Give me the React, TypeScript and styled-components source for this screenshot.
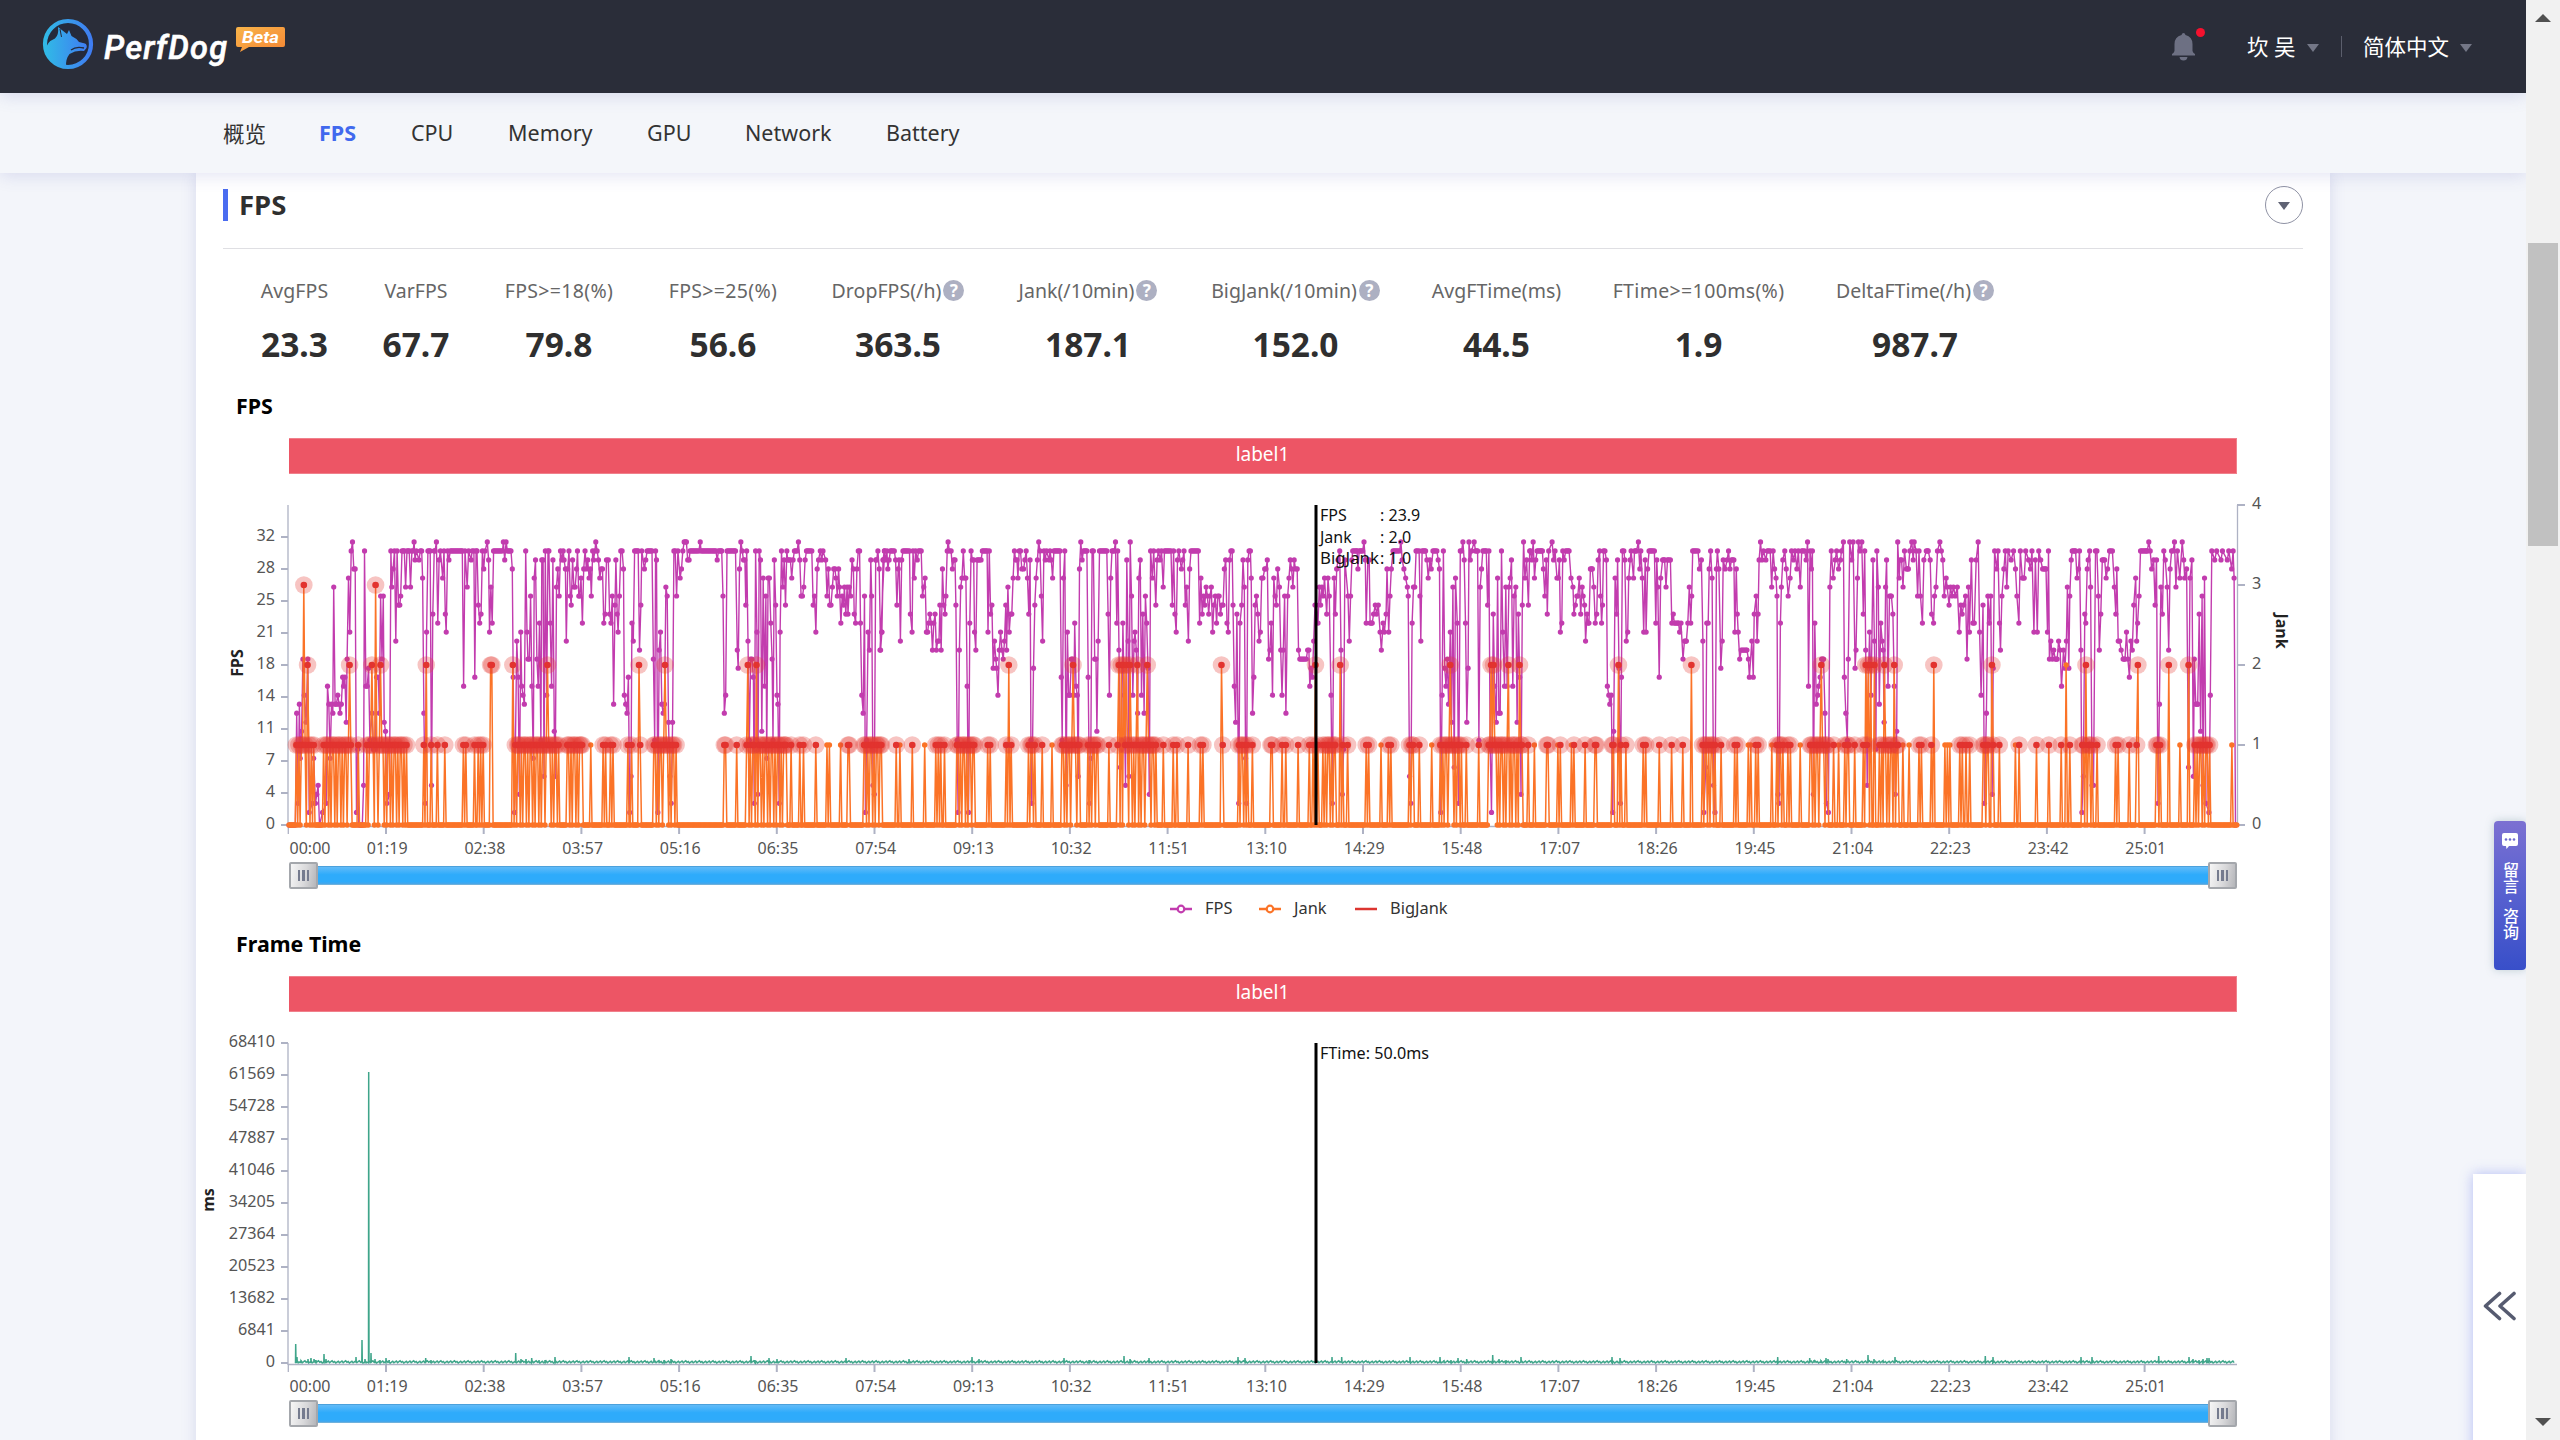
import React from "react";
import styled, { createGlobalStyle } from "styled-components";

const FONT = `"Noto Sans", "Noto Sans CJK SC", "Open Sans", sans-serif`;

const GlobalStyle = createGlobalStyle`
  * { box-sizing: border-box; }
  body { margin: 0; background: #f3f5fa; font-family: ${FONT}; overflow: hidden; }
`;

/* ---------- series data ---------- */

const STEP = 1.2367;
const PLOT_H = 320;
const FPS_PX = 9.015;
const PLOT_W = 1948;

type Trace = { origin: number; unit: number; fps: string; jank: string };

const TRACES: Trace[] = [
  {
    origin: -99,
    unit: 0.4464,
    fps: `222 0,236 0,239 12,242 2,245 13,247 7,250 10,253 18,256 14,260 11,264 18,267 1,274 2,277 7,281 2,284 3,287 4,290 0,297 1,305 2,308 15,311 13,314 7,317 13,320 12,322 26,325 13,328 13,331 14,334 13,336 12,339 13,342 16,344 15,347 16,350 11,352 18,355 27,358 21,361 30,364 31,367 28,370 28,373 1,376 8,378 0,386 0,389 4,391 30,394 15,397 15,400 17,403 9,408 12,411 8,415 8,418 16,422 16,424 12,427 25,430 18,433 25,435 11,438 10,441 2,447 3,450 30,452 26,455 28,458 30,461 20,464 30,467 24,470 24,472 25,475 30,480 30,483 26,486 30,491 30,494 26,497 30,500 30,502 31,504 29,507 30,513 29,516 30,519 30,521 27,524 12,527 2,530 21,533 30,538 30,541 4,544 23,547 30,549 30,552 31,555 22,558 29,561 30,566 27,569 30,572 23,574 21,577 30,580 29,583 30,610 30,613 15,616 30,621 26,624 30,630 29,632 30,636 30,638 16,641 30,643 30,646 24,649 22,652 23,655 30,658 28,661 30,666 31,669 29,671 21,674 26,677 22,680 30,700 30,702 31,705 29,708 31,711 30,719 30,722 28,724 16,727 1,732 20,735 16,738 3,741 21,743 15,746 14,749 13,752 30,755 21,757 18,760 18,763 25,766 15,769 7,771 27,774 29,777 18,780 15,783 22,786 9,788 29,791 29,793 5,796 30,799 14,802 30,804 30,807 22,810 15,813 29,816 10,818 5,821 26,824 28,827 25,830 30,833 29,836 30,838 29,841 28,843 20,846 28,849 30,852 25,854 24,857 29,860 26,863 26,866 28,868 30,871 25,873 25,876 27,879 22,882 28,885 30,888 28,891 29,894 27,897 28,899 25,902 30,904 29,907 30,909 31,912 30,915 29,918 27,921 28,924 28,927 22,930 23,933 29,937 29,940 23,943 22,946 25,949 13,952 24,954 29,957 23,959 21,962 25,965 30,968 30,971 28,973 14,976 13,979 12,982 16,985 1,988 5,990 22,993 20,996 30,1004 30,1007 19,1010 24,1012 30,1018 28,1021 29,1024 30,1035 30,1038 18,1041 9,1043 30,1045 29,1048 1,1051 19,1054 21,1057 13,1060 12,1063 13,1066 26,1069 25,1072 11,1075 5,1078 2,1081 11,1084 30,1087 30,1090 25,1093 30,1098 27,1101 28,1104 30,1107 31,1112 31,1115 29,1118 29,1120 30,1140 30,1143 31,1145 30,1178 30,1181 29,1184 30,1191 30,1194 25,1197 12,1200 14,1203 30,1222 30,1226 19,1228 17,1231 28,1234 31,1237 30,1240 29,1243 29,1245 24,1247 30,1250 20,1253 9,1256 18,1259 18,1262 16,1264 2,1267 30,1270 21,1272 3,1275 30,1278 29,1281 10,1284 27,1287 15,1290 25,1292 7,1295 27,1298 27,1301 22,1304 18,1306 9,1309 29,1312 24,1315 14,1317 13,1320 2,1322 21,1325 30,1328 26,1331 29,1334 24,1337 30,1339 29,1345 29,1348 27,1351 29,1354 30,1360 30,1363 31,1366 29,1369 25,1372 25,1375 26,1378 29,1381 30,1393 30,1396 24,1399 25,1402 21,1405 28,1408 29,1412 30,1415 29,1418 30,1424 29,1427 25,1430 28,1433 24,1436 24,1439 26,1442 28,1445 28,1447 27,1450 25,1453 28,1455 26,1458 22,1461 25,1464 24,1466 26,1469 23,1472 26,1474 23,1477 26,1480 25,1483 29,1486 28,1488 23,1491 22,1494 28,1497 30,1500 30,1502 22,1505 14,1508 12,1511 25,1513 1,1516 9,1519 21,1522 19,1525 29,1527 25,1530 4,1533 3,1536 29,1538 29,1541 30,1544 28,1547 19,1550 21,1553 29,1556 30`,
    jank: `239-277,256:3,264:2,297-360,358:2,376,397-485,408:2,416:3,428:2,523,529:2,541,555,571,613,618,638,645,652,656,673:2,677:2,724:2,727-825,801:2,846-877,898!,926,931,941,949,982,989,1006:2,1009,1038-1090,1065:2,1197,1201,1225,1247-1336,1250:2,1269:2,1347,1367,1375,1402,1427!,1433!,1458!,1473,1478,1511-1548`,
  },
  {
    origin: 591,
    unit: 0.4337,
    fps: `0 19,4 21,7 29,10 30,13 29,16 30,18 28,21 29,24 30,33 30,36 29,39 24,42 28,44 29,47 20,50 29,53 30,68 30,70 23,74 21,76 30,79 27,82 30,86 29,89 30,95 30,98 25,101 26,104 27,107 21,110 21,112 22,115 23,118 22,121 19,124 22,127 23,130 19,133 20,136 20,138 24,141 19,144 28,147 24,150 23,152 25,155 30,157 31,160 30,164 30,167 28,170 29,173 29,175 24,178 9,180 1,183 19,186 26,189 27,192 30,195 27,198 27,201 15,204 1,207 22,210 30,213 29,216 29,218 21,221 19,224 29,233 29,236 30,247 30,249 21,252 30,255 23,258 24,261 17,264 20,267 18,269 17,272 14,275 19,278 21,281 19,284 18,287 20,290 24,292 19,295 26,298 21,301 23,304 23,307 27,310 30,313 29,316 29,318 27,321 30,324 30,327 28,331 28,334 29,337 30,340 27,343 23,346 29,348 9,350 2,354 17,357 24,360 27,363 29,366 31,369 30,372 25,375 20,378 30,381 29,384 30,390 29,392 30,395 29,398 27,401 30,415 30,418 16,420 9,423 27,426 30,429 4,432 21,435 14,438 14,441 18,444 18,447 14,449 22,452 15,455 14,457 5,460 28,463 31,466 29,469 30,477 30,480 16,483 2,486 7,489 30,492 30,495 18,498 18,500 10,503 20,506 30,523 30,526 23,529 14,532 27,535 30,540 30,543 31,546 22,548 30,551 19,554 6,557 9,560 22,563 14,566 4,569 29,572 20,574 5,577 31,580 25,583 14,586 20,588 21,591 19,594 12,597 27,600 29,603 14,606 23,609 12,612 25,615 22,618 17,621 3,624 30,628 27,631 30,636 24,639 29,642 30,646 29,649 30,653 26,656 30,671 30,674 24,677 30,680 23,683 21,686 29,689 30,695 28,698 29,701 30,704 24,707 26,711 20,714 28,717 30,734 30,737 22,740 27,743 23,746 25,749 24,752 26,755 25,758 23,761 25,764 26,767 21,770 24,773 25,776 22,779 25,782 25,785 23,788 24,791 24,794 28,797 29,800 22,803 21,806 29,809 30,812 30,814 24,817 15,820 11,823 23,827 2,830 22,834 24,837 29,840 26,843 7,845 2,848 29,851 30,854 30,856 27,859 12,862 16,865 24,868 25,871 23,874 20,877 21,880 27,883 27,887 28,890 28,893 29,896 18,899 19,902 22,905 14,908 27,911 25,914 24,917 28,921 26,924 19,927 14,930 19,933 25,936 12,940 25,943 27,946 29,949 28,952 26,955 29,958 28,962 28,965 19,968 18,983 18,986 19,989 19,991 15,994 17,997 16,1000 20,1003 24,1006 24,1010 22,1013 26,1016 24,1019 26,1022 25,1025 27,1030 23,1033 27,1036 25,1040 14,1043 2,1047 27,1050 23,1053 28,1056 29,1060 30,1063 19,1066 3,1069 8,1072 29,1079 25,1082 20,1085 25,1088 29,1090 30,1100 30,1102 28,1105 30,1113 30,1116 31,1119 29,1121 22,1125 29,1128 29,1130 22,1135 22,1138 23,1142 24,1145 23,1149 24,1153 21,1156 19,1160 22,1163 21,1167 23,1169 28,1173 21,1176 25,1179 28,1183 30,1198 30,1201 31,1204 29,1208 28,1212 27,1216 26,1218 25,1221 5,1224 2,1227 22,1230 26,1233 26,1236 30,1243 30,1245 25,1247 20,1250 30,1258 30,1261 29,1264 27,1268 29,1271 28,1275 30,1284 30,1287 29,1290 28,1293 1,1296 14,1299 30,1302 17,1305 15,1308 18,1311 13,1315 21,1318 11,1321 26,1324 6,1327 27,1331 22,1334 2,1338 30,1341 30,1344 31,1347 29,1350 22,1353 11,1356 17,1358 31,1361 29,1364 30,1370 31,1373 30,1378 30,1381 9,1384 26,1387 28,1390 30,1398 30,1401 24,1404 30,1407 8,1410 1,1414 23,1417 15,1421 11,1424 27,1427 12,1430 12,1433 30,1436 21,1440 15,1443 26,1446 15,1450 26,1453 27,1456 29,1459 15,1462 25,1466 26,1469 11,1472 23,1475 16,1478 3,1481 24,1484 31,1487 27,1491 29,1495 24,1498 30,1500 30,1503 29,1506 31,1509 27,1512 29,1515 30,1525 30`,
    jank: `0,38,45!,74,103!,129,134,141,150,175-218,249,254,290,298:2,303,343-358,373,397!,418-458,445:2,480-503,529,548-630,551:2,557:2,563:2,569:2,575:2,593:2,617:2,637,654,675,684,710,740,745,787:2,790,823-848,859,900,905,927,935,963,990,997,1003:2,1010,1020-1050,1062:2,1066,1077,1122,1127,1156!,1172,1177,1220-1230,1245,1271!,1292-1340,1315:2,1352,1381,1400-1480,1408:2,1415:2,1450:2,1475:2,1495,1509!`,
  },
  {
    origin: 1251,
    unit: 0.4847,
    fps: `5 30,7 28,10 25,13 29,15 23,18 30,25 31,28 29,31 30,35 27,38 27,40 29,42 21,45 22,47 30,50 29,53 30,60 30,64 27,68 26,70 23,73 24,76 25,78 25,81 27,84 23,87 26,89 25,92 24,94 20,97 23,99 22,101 22,104 28,108 28,111 26,114 22,117 23,120 29,123 30,125 25,127 22,129 24,131 30,134 30,137 29,139 15,142 14,144 13,147 14,150 1,152 10,155 27,158 23,160 29,163 17,166 2,168 16,170 30,173 30,175 29,178 20,181 21,183 27,186 29,188 30,193 27,195 30,199 30,203 31,206 28,208 30,211 27,214 21,217 29,219 21,222 28,225 30,236 30,239 22,241 29,243 26,246 16,249 27,253 29,257 29,260 26,263 29,269 29,272 22,275 23,277 22,286 22,288 21,291 22,295 18,298 20,302 20,305 22,308 26,311 22,313 25,315 30,326 30,329 28,333 29,336 20,338 1,342 6,344 22,347 22,349 28,352 30,355 27,358 4,361 1,364 28,366 30,369 28,373 17,376 20,378 29,382 28,386 29,389 30,392 28,395 29,400 29,402 21,405 28,407 23,409 21,412 18,415 19,427 19,430 18,432 16,437 20,440 16,442 23,446 25,448 20,450 23,452 29,455 31,458 29,461 30,466 29,469 30,475 30,478 26,481 30,484 28,487 27,489 25,491 3,493 2,496 22,498 26,501 29,505 30,508 28,512 25,516 27,519 30,523 29,526 30,530 28,533 30,537 26,540 30,546 30,549 29,552 31,554 15,557 30,560 28,562 30,564 3,567 22,570 13,573 14,575 15,578 16,581 18,585 18,588 12,591 2,595 1,598 26,601 30,605 27,609 29,612 30,616 28,620 29,622 30,626 31,628 16,631 12,634 9,636 18,639 31,643 29,646 31,650 17,652 19,655 27,657 31,660 30,664 31,667 23,670 30,672 19,675 4,678 17,680 21,683 14,687 29,690 20,693 8,695 30,698 26,700 13,703 22,706 20,708 19,710 11,713 26,715 29,718 15,721 25,725 25,728 23,731 15,733 3,736 10,738 31,741 27,743 29,746 29,749 26,752 30,756 28,760 28,763 30,767 31,770 29,772 31,776 30,779 25,782 30,785 25,789 22,792 29,797 30,801 30,805 29,808 23,812 22,814 25,817 26,820 30,825 31,828 30,831 29,834 25,838 27,840 26,844 24,847 26,850 25,853 26,857 25,861 26,865 21,868 24,871 23,874 24,878 25,881 18,884 26,886 21,890 29,893 22,896 22,900 29,904 31,907 21,910 14,914 24,917 2,921 12,924 25,927 22,930 25,933 3,935 17,938 30,942 28,945 30,948 22,950 19,953 25,957 28,960 30,963 26,966 30,972 29,977 30,981 28,984 25,988 22,991 30,995 27,999 27,1002 30,1008 29,1012 28,1015 30,1019 21,1022 29,1026 21,1029 30,1033 29,1037 28,1044 28,1047 21,1049 30,1051 18,1054 20,1057 18,1060 19,1063 18,1067 18,1070 20,1073 19,1076 15,1080 19,1083 17,1086 20,1088 26,1091 17,1093 25,1096 29,1098 30,1105 30,1108 27,1111 28,1113 30,1116 19,1118 1,1121 5,1124 23,1126 22,1129 28,1131 29,1134 30,1136 26,1139 4,1142 4,1146 30,1149 30,1152 25,1154 19,1157 23,1160 29,1165 29,1168 27,1171 28,1175 30,1181 30,1185 26,1188 23,1190 28,1193 20,1196 20,1199 19,1203 18,1207 18,1210 21,1213 18,1216 16,1219 20,1222 19,1225 24,1229 27,1231 20,1233 22,1236 25,1239 30,1253 30,1256 31,1259 30,1262 28,1266 29,1269 24,1272 29,1275 2,1278 13,1281 26,1284 23,1287 30,1290 29,1294 26,1297 19,1300 28,1303 30,1306 30,1309 31,1312 26,1315 30,1320 27,1325 31,1328 29,1330 27,1334 28,1338 6,1341 27,1345 29,1348 5,1350 18,1353 13,1357 13,1360 23,1363 10,1366 25,1368 4,1371 27,1374 2,1380 1,1383 14,1386 30,1392 29,1396 30,1405 29,1408 30,1418 29,1421 30,1427 28,1430 30,1432 27,1435 0`,
    jank: `13,17,36!,42,64!,70,94,113,117,146-152,163:2,168,178,213,219,247,272,295,313:2,335-360,373,402,408,430!,436!,444,450,477!,486-500,512,517,537!,557-592,580:2,606,616!,630-636,649,668-676,671:2,677:2,683:2,690:2,710:2,730:2,700-738,748!,761!,781,787,808,812:2,836!,840!,846!,866,872,880,886,914-924,932:2,936,947,980!,988,1024,1051,1076,1086:2!,1092,1115-1140,1126:2,1150,1188,1192,1215,1231,1234:2,1271-1280,1297:2,1320!,1338:2,1350-1382,1427!`,
  },
];

type Pt = { x: number; y: number };

const fpsPoints: Pt[] = [];
TRACES.forEach((t) => {
  let prev: { x: number; v: number } | null = null;
  t.fps.split(",").forEach((pair) => {
    const [a, v] = pair.trim().split(" ").map(Number);
    const x = t.origin + a * t.unit;
    if (prev && prev.v === v) {
      for (let f = prev.x + STEP; f < x - 0.6; f += STEP) {
        fpsPoints.push({ x: f, y: PLOT_H - (v ? v + 0.4 : 0) * FPS_PX });
      }
    }
    fpsPoints.push({ x, y: PLOT_H - (v ? v + 0.4 : 0) * FPS_PX });
    prev = { x, v };
  });
});

const SAMPLES = Math.round(PLOT_W / STEP);
const jank: number[] = new Array(SAMPLES + 1).fill(0);
const big: boolean[] = new Array(SAMPLES + 1).fill(false);
TRACES.forEach((t) => {
  const index = (a: number) => Math.round((t.origin + a * t.unit) / STEP);
  t.jank.split(",").forEach((raw) => {
    const token = raw.replace("!", "");
    const isBig = !raw.includes("!");
    if (token.includes("-")) {
      const [a, b] = token.split("-").map(Number);
      for (let i = index(a); i <= index(b); i++) {
        if ((i * 7) % 5 < 3 || i === index(b)) {
          jank[i] = Math.max(jank[i], 1);
          big[i] = true;
        }
      }
    } else {
      const [a, v] = token.split(":").map(Number);
      jank[index(a)] = v || 1;
      big[index(a)] = isBig;
    }
  });
});
const jankPoints: Pt[] = jank.map((v, i) => ({ x: i * STEP, y: PLOT_H - v * 80 }));
const bigPoints = jankPoints.filter((_, i) => big[i]);

const toPath = (pts: Pt[]) => "M" + pts.map((p) => `${p.x.toFixed(1)} ${p.y.toFixed(1)}`).join("L");

/* Frame-time peaks: plot x, height */
const PEAKS: [number, number][] = [
  [6.7, 19], [8, 6], [12, 3], [19, 4], [22, 5], [25, 4], [27, 3], [35, 9], [37, 4], [67, 6], [73, 23], [76, 4],
  [79.7, 291], [82, 10], [86, 4], [91, 3], [97, 5], [100, 3], [136.7, 5], [142, 3], [226.7, 10], [232, 4], [237, 4],
  [242.7, 5], [250, 3], [256, 3], [266, 6], [340, 6], [365, 5], [370, 3], [375, 3], [382, 4], [462, 7], [466, 3],
  [480, 5], [488, 4], [557, 5], [620, 4], [683, 6], [690, 4], [775, 5], [800, 3], [835, 7], [841, 4], [860, 5],
  [949, 6], [956, 5], [1043, 6], [1052.7, 6], [1121, 6], [1151, 6], [1155, 3], [1162, 3], [1169, 5], [1177.7, 4],
  [1203.7, 8], [1210, 4], [1217, 3], [1232, 6], [1323, 6], [1331, 5], [1488.7, 6], [1520.7, 5], [1525, 3],
  [1532, 3], [1537, 5], [1539, 4], [1557.7, 4], [1579, 8], [1585, 4], [1594, 3], [1606, 6], [1696.3, 7], [1704, 6],
  [1792, 6], [1803, 6], [1869.7, 7], [1900, 6], [1904, 4], [1910, 3], [1914, 4], [1918, 5], [1920, 5],
];
const ftimePath = (() => {
  const pts: Pt[] = [];
  let k = 0;
  for (let x = 6, i = 0; x < 1946; x += STEP, i++) {
    while (k < PEAKS.length && PEAKS[k][0] <= x) {
      const [px, h] = PEAKS[k++];
      pts.push({ x: px - 0.2, y: 319.5 }, { x: px, y: 320 - h }, { x: px + 0.3, y: 319.5 });
    }
    pts.push({ x, y: 320 - (((i * 37) % 11) / 11) * 2.4 });
  }
  return toPath(pts);
})();

const TIMES = ["00:00", "01:19", "02:38", "03:57", "05:16", "06:35", "07:54", "09:13", "10:32", "11:51", "13:10", "14:29", "15:48", "17:07", "18:26", "19:45", "21:04", "22:23", "23:42", "25:01"];
const FPS_TICKS = ["0", "4", "7", "11", "14", "18", "21", "25", "28", "32"];
const MS_TICKS = ["0", "6841", "13682", "20523", "27364", "34205", "41046", "47887", "54728", "61569", "68410"];

/* ---------- styled parts ---------- */

const Page = styled.div`
  display: grid;
  grid-template-columns: 2526px 34px;
  width: 2560px;
  height: 1440px;
  overflow: hidden;
  background: #f3f5fa;
`;
const Main = styled.div`
  position: relative;
  display: flex;
  flex-direction: column;
  height: 1440px;
  overflow: hidden;
`;
const Header = styled.header`
  flex: none;
  display: flex;
  align-items: center;
  justify-content: space-between;
  height: 93px;
  padding: 0 54px 0 42px;
  background: #2a2d39;
  z-index: 3;
  box-shadow: 0 3px 16px rgba(80, 90, 180, 0.18);
`;
const LogoSvg = styled.svg`
  display: block;
  margin-top: -5px;
`;
const HeaderMenu = styled.div`
  display: flex;
  align-items: center;
  color: #fff;
  font-size: 21.5px;
  line-height: 32px;
`;
const BellWrap = styled.div`
  position: relative;
  width: 23px;
  height: 28px;
  margin-right: 52px;
  svg { display: block; }
`;
const RedDot = styled.i`
  position: absolute;
  top: -5px;
  right: -10px;
  width: 9px;
  height: 9px;
  border-radius: 50%;
  background: #f5112e;
`;
const MenuText = styled.span<{ $w: number }>`
  width: ${(p) => p.$w}px;
  white-space: nowrap;
`;
const Caret = styled.i<{ $color: string }>`
  margin-top: 3px;
  border: 6px solid transparent;
  border-top: 8px solid ${(p) => p.$color};
  border-bottom: 0;
`;
const Separator = styled.i`
  width: 1px;
  height: 21px;
  margin: 0 21px 0 22px;
  background: #5b5e6c;
`;
const Nav = styled.nav`
  flex: none;
  display: flex;
  align-items: center;
  height: 80px;
  padding: 0 0 2px 223px;
  background: #f4f6fa;
  z-index: 2;
  box-shadow: 0 3px 16px rgba(80, 90, 180, 0.16);
`;
const NavItem = styled.a<{ $w: number; $active?: boolean }>`
  width: ${(p) => p.$w}px;
  margin-right: 53px;
  color: ${(p) => (p.$active ? "#4169ee" : "#333")};
  font-size: 21.5px;
  font-weight: ${(p) => (p.$active ? 700 : 400)};
  white-space: nowrap;
`;
const Panel = styled.section`
  width: 2134px;
  height: 1300px;
  flex: none;
  margin-left: 196px;
  background: #fff;
  box-shadow: 0 0 14px rgba(90, 95, 180, 0.18);
`;
const PanelHead = styled.div`
  display: flex;
  align-items: center;
  justify-content: space-between;
  height: 76px;
  margin: 0 27px;
  padding-bottom: 12px;
  border-bottom: 1px solid #dfdfe3;
`;
const PanelTitle = styled.h2`
  display: flex;
  align-items: center;
  gap: 11px;
  margin: 0;
  color: #2f2f2f;
  font-size: 27.5px;
  line-height: 32px;
  &::before {
    content: "";
    width: 5px;
    height: 32px;
    background: #4a6cf0;
  }
`;
const RoundButton = styled.button`
  display: flex;
  align-items: center;
  justify-content: center;
  width: 38px;
  height: 38px;
  padding: 0;
  border: 1px solid #8f92a4;
  border-radius: 50%;
  background: #fff;
`;
const Stats = styled.div`
  display: flex;
  gap: 54px;
  height: 143px;
  padding: 27px 0 0 65px;
`;
const Stat = styled.div<{ $w: number }>`
  display: flex;
  flex-direction: column;
  align-items: center;
  width: ${(p) => p.$w}px;
`;
const StatLabel = styled.div<{ $wide: boolean }>`
  display: flex;
  align-items: center;
  gap: 2px;
  height: 28px;
  color: #666;
  font-size: 19.5px;
  letter-spacing: ${(p) => (p.$wide ? 0.35 : 0.05)}px;
  white-space: nowrap;
`;
const StatValue = styled.div`
  margin-top: 17px;
  color: #2f2f2f;
  font-size: 33.5px;
  font-weight: 700;
  line-height: 46px;
`;
const Help = styled.i`
  display: flex;
  align-items: center;
  justify-content: center;
  width: 21px;
  height: 21px;
  border-radius: 50%;
  background: #adb0c2;
  color: #fff;
  font-size: 17px;
  font-style: normal;
  font-weight: 700;
`;
const ChartBlock = styled.div`
  display: flex;
  flex-direction: column;
  height: 538px;
`;
const ChartTitle = styled.h3`
  height: 46px;
  margin: 0;
  padding-left: 40px;
  color: #000;
  font-size: 21.4px;
  line-height: 27px;
`;
const Band = styled.div`
  flex: none;
  width: 1948px;
  height: 36px;
  margin-left: 93px;
  border: 1px solid #f0808b;
  border-left: 0;
  background: #ed5565;
  color: #fff;
  font-size: 19px;
  line-height: 31px;
  text-align: center;
`;
const Plot = styled.svg`
  flex: none;
  display: block;
  font-family: ${FONT};
`;
const Slider = styled.div`
  flex: none;
  display: flex;
  align-items: center;
  width: 1948px;
  height: 27px;
  margin-left: 93px;
`;
const SliderTrack = styled.div`
  flex: 1;
  height: 19px;
  border-top: 1px solid #4ba1dc;
  border-bottom: 1px solid #6fb1dc;
  background: linear-gradient(#62bbf8, #2eabfb 45%, #2eabfb 85%, #48a6e8);
`;
const Handle = styled.div`
  display: flex;
  align-items: center;
  justify-content: center;
  gap: 2px;
  width: 29px;
  height: 27px;
  border: 2px solid #a4a7ac;
  border-radius: 2px;
  background: linear-gradient(100deg, #f6f6f6, #d9d9db 55%, #b4b5b9);
`;
const Grip = styled.i`
  width: 2.5px;
  height: 11px;
  background: #757b8e;
`;
const Legend = styled.div`
  display: flex;
  align-items: center;
  height: 36px;
  padding-left: 974px;
  color: #333;
  font-size: 16.4px;
`;
const LegendItem = styled.div<{ $w: number }>`
  display: flex;
  align-items: center;
  gap: 13px;
  width: ${(p) => p.$w}px;
  svg { margin-top: 3px; }
`;
const Feedback = styled.aside`
  position: absolute;
  right: 0;
  top: 821px;
  display: flex;
  flex-direction: column;
  align-items: center;
  width: 32px;
  height: 149px;
  padding-top: 12px;
  border-radius: 4px;
  background: linear-gradient(#7b70d2, #5a62d0 45%, #384fc9);
  box-shadow: 0 0 8px rgba(90, 130, 140, 0.35);
  color: #fff;
  z-index: 4;
`;
const FeedbackText = styled.span`
  margin-top: 13px;
  font-size: 16px;
  font-weight: 500;
  line-height: 20px;
  writing-mode: vertical-rl;
  white-space: pre;
  word-spacing: 0.5px;
`;
const Drawer = styled.aside`
  position: absolute;
  right: 0;
  top: 1174px;
  display: flex;
  justify-content: center;
  width: 53px;
  height: 280px;
  padding: 117px 1px 0 0;
  background: #fff;
  box-shadow: 0 0 12px rgba(90, 110, 240, 0.4);
  z-index: 4;
`;
const ScrollBar = styled.div`
  display: flex;
  flex-direction: column;
  align-items: center;
  background: #f1f1f1;
`;
const ScrollArrow = styled.i<{ $up?: boolean; $gap: number }>`
  margin-top: ${(p) => p.$gap}px;
  border: 8px solid transparent;
  ${(p) => (p.$up ? "border-bottom: 8px solid #505050; border-top: 0;" : "border-top: 8px solid #505050; border-bottom: 0;")}
`;
const ScrollThumb = styled.div`
  width: 30px;
  height: 303px;
  margin-top: 221px;
  background: #c1c1c1;
`;

/* ---------- drawings ---------- */

const Logo = () => (
  <LogoSvg width="250" height="60" viewBox="42 14 250 60">
    <defs>
      <linearGradient id="ring" x1="0" x2="1">
        <stop offset="0" stopColor="#31b9e6" />
        <stop offset="1" stopColor="#3f7df2" />
      </linearGradient>
      <linearGradient id="beta" x1="0" x2="1" y2="1">
        <stop offset="0" stopColor="#f8b44a" />
        <stop offset="1" stopColor="#f58634" />
      </linearGradient>
    </defs>
    <circle cx="68" cy="44" r="23" fill="#252a3c" stroke="url(#ring)" strokeWidth="4.2" />
    <path
      d="M58 27 L67 34 L69 30 L71.500 36 Q76 38 79 42 L85 43.500 Q87.500 45 86.500 48 L84 51 Q76 50 69.500 54 Q65.500 59 66 67 Q50 65 45.500 51 Q46 42 55 38.500 Q59 35 58 27Z"
      fill="url(#ring)"
    />
    <path d="M71 50 Q76 46 84 48" fill="none" stroke="#252a3c" strokeWidth="1.300" />
    <path d="M60 29 L61.500 37" stroke="#252a3c" strokeWidth="1" />
    <text x="104" y="58.500" textLength="123" lengthAdjust="spacing" fill="#fff" stroke="#fff" strokeWidth="0.600" fontFamily="Roboto, sans-serif" fontSize="32.500" fontWeight="500" fontStyle="italic">
      PerfDog
    </text>
    <path d="M238 27H283Q285 27 285 29V45Q285 47 283 47H249L240 52L242 47H238Q236 47 236 45V29Q236 27 238 27Z" fill="url(#beta)" />
    <text x="242" y="43" textLength="37" lengthAdjust="spacingAndGlyphs" fill="#fff" fontFamily="Roboto, sans-serif" fontSize="17" fontWeight="700" fontStyle="italic">
      Beta
    </text>
  </LogoSvg>
);

const Bell = () => (
  <svg width="23" height="28" viewBox="0 0 23 28" fill="#6d7083">
    <path d="M11.500 0Q13 0 13.500 2Q20.500 4 20.500 11V18Q21 20 23 21V22.500H0V21Q2 20 2.500 18V11Q2.500 4 9.500 2Q10 0 11.500 0Z" />
    <path d="M7.500 24H15.500Q15 27.500 11.500 27.500Q8 27.500 7.500 24Z" />
  </svg>
);

const AXIS = "#aeb2c4";

const TimeAxis = () => (
  <g>
    <path d={`M-1 321.500H${PLOT_W}`} stroke={AXIS} strokeWidth="1.300" />
    {TIMES.map((t, i) => (
      <g key={t}>
        <path d={`M${-0.7 + i * 97.7} 321V329`} stroke={AXIS} strokeWidth={i ? 2 : 1.3} />
        <text x={i ? i * 97.7 + 0.5 : 21} y="349" textAnchor="middle" fontSize="16" fill="#555">{t}</text>
      </g>
    ))}
  </g>
);

const LeftAxis = ({ labels, name, nameX, nameY }: { labels: string[]; name: string; nameX: number; nameY: number }) => (
  <g>
    <path d="M-1 0V322" stroke={AXIS} strokeWidth="1.300" />
    {labels.map((t, i) => (
      <g key={t}>
        <path d={`M-8 ${320 - i * 32}H-1`} stroke={AXIS} strokeWidth="2" />
        <text x="-14" y={324 - i * 32} textAnchor="end" fontSize="16.200" fill="#555">{t}</text>
      </g>
    ))}
    <text transform={`translate(${nameX} ${nameY}) rotate(-90)`} textAnchor="middle" fontSize="16" fontWeight="700" fill="#222">{name}</text>
  </g>
);

const FpsPlot = () => (
  <Plot width="2134" height="388" viewBox="-93 -31 2134 388">
    <TimeAxis />
    <LeftAxis labels={FPS_TICKS} name="FPS" nameX={-46} nameY={158} />
    <path d="M1948.500 0V320" stroke={AXIS} strokeWidth="1.300" />
    {["0", "1", "2", "3", "4"].map((t, i) => (
      <g key={t}>
        <path d={`M1948 ${320 - i * 80}H1956`} stroke={AXIS} strokeWidth="2" />
        <text x="1963" y={324 - i * 80} fontSize="16.200" fill="#555">{t}</text>
      </g>
    ))}
    <text transform="translate(1987 126) rotate(90)" textAnchor="middle" fontSize="16" fontWeight="700" fill="#222">Jank</text>
    <path d={toPath(fpsPoints)} fill="none" stroke="#c23cae" strokeWidth="1.400" />
    {fpsPoints.map((p, i) => (
      <circle key={i} cx={p.x} cy={p.y} r="2.600" fill="#c23cae" />
    ))}
    <path d={toPath(jankPoints)} fill="none" stroke="#fb7327" strokeWidth="1.500" />
    {jankPoints.map((p, i) => (
      <circle key={i} cx={p.x} cy={p.y} r="2.700" fill="#fb7327" />
    ))}
    {bigPoints.map((p, i) => (
      <circle key={i} cx={p.x} cy={p.y} r="8.800" fill="#e43d35" fillOpacity="0.300" />
    ))}
    {bigPoints.map((p, i) => (
      <circle key={i} cx={p.x} cy={p.y} r="3.300" fill="#e2332f" />
    ))}
    <path d="M1027 0V320" stroke="#000" strokeWidth="3" />
    <g fontSize="16" fill="#111">
      <text x="1031" y="16">FPS</text>
      <text x="1031" y="38">Jank</text>
      <text x="1031" y="59" textLength="59" lengthAdjust="spacingAndGlyphs">BigJank</text>
      {["23.9", "2.0", "1.0"].map((v, i) => (
        <React.Fragment key={v}>
          <text x="1091" y={[16, 38, 59][i]}>:</text>
          <text x="1099.500" y={[16, 38, 59][i]}>{v}</text>
        </React.Fragment>
      ))}
    </g>
  </Plot>
);

const FrameTimePlot = () => (
  <Plot width="2134" height="388" viewBox="-93 -31 2134 388">
    <TimeAxis />
    <LeftAxis labels={MS_TICKS} name="ms" nameX={-75} nameY={157} />
    <path d={ftimePath} fill="none" stroke="#3fa58a" strokeWidth="1.500" />
    <path d="M1027 0V320" stroke="#000" strokeWidth="3" />
    <text x="1031" y="16" fontSize="16" fill="#111" textLength="109" lengthAdjust="spacingAndGlyphs">FTime: 50.0ms</text>
  </Plot>
);

const RangeSlider = () => (
  <Slider>
    <Handle><Grip /><Grip /><Grip /></Handle>
    <SliderTrack />
    <Handle><Grip /><Grip /><Grip /></Handle>
  </Slider>
);

const LEGEND = [
  { name: "FPS", color: "#c23cae", w: 89, dot: true },
  { name: "Jank", color: "#fb7327", w: 96, dot: true },
  { name: "BigJank", color: "#dc3530", w: 110, dot: false },
];

const STATS = [
  { label: "AvgFPS", value: "23.3", w: 67 },
  { label: "VarFPS", value: "67.7", w: 68 },
  { label: "FPS>=18(%)", value: "79.8", w: 110 },
  { label: "FPS>=25(%)", value: "56.6", w: 110 },
  { label: "DropFPS(/h)", value: "363.5", w: 132, help: true },
  { label: "Jank(/10min)", value: "187.1", w: 140, help: true },
  { label: "BigJank(/10min)", value: "152.0", w: 167, help: true },
  { label: "AvgFTime(ms)", value: "44.5", w: 127 },
  { label: "FTime>=100ms(%)", value: "1.9", w: 169 },
  { label: "DeltaFTime(/h)", value: "987.7", w: 156, help: true },
];

const NAV = [
  { name: "概览", w: 43 },
  { name: "FPS", w: 39 },
  { name: "CPU", w: 44 },
  { name: "Memory", w: 86 },
  { name: "GPU", w: 45 },
  { name: "Network", w: 88 },
  { name: "Battery", w: 73 },
];

export default function App() {
  return (
    <Page>
      <GlobalStyle />
      <Main>
        <Header>
          <Logo />
          <HeaderMenu>
            <BellWrap>
              <Bell />
              <RedDot />
            </BellWrap>
            <MenuText $w={60}>坎 吴</MenuText>
            <Caret $color="#747787" />
            <Separator />
            <MenuText $w={97}>简体中文</MenuText>
            <Caret $color="#747787" />
          </HeaderMenu>
        </Header>
        <Nav>
          {NAV.map((n) => (
            <NavItem key={n.name} $w={n.w} $active={n.name === "FPS"}>{n.name}</NavItem>
          ))}
        </Nav>
        <Panel>
          <PanelHead>
            <PanelTitle>FPS</PanelTitle>
            <RoundButton><Caret $color="#5f6273" /></RoundButton>
          </PanelHead>
          <Stats>
            {STATS.map((s) => (
              <Stat key={s.label} $w={s.w}>
                <StatLabel $wide={s.label.includes(">=")}>{s.label}{s.help && <Help>?</Help>}</StatLabel>
                <StatValue>{s.value}</StatValue>
              </Stat>
            ))}
          </Stats>
          <ChartBlock>
            <ChartTitle>FPS</ChartTitle>
            <Band>label1</Band>
            <FpsPlot />
            <RangeSlider />
            <Legend>
              {LEGEND.map((l) => (
                <LegendItem key={l.name} $w={l.w}>
                  <svg width="22" height="10" viewBox="0 0 22 10">
                    <path d="M0 5H22" stroke={l.color} strokeWidth="2.500" />
                    {l.dot && <circle cx="11" cy="5" r="3.300" fill="#fff" stroke={l.color} strokeWidth="2.200" />}
                  </svg>
                  {l.name}
                </LegendItem>
              ))}
            </Legend>
          </ChartBlock>
          <ChartBlock>
            <ChartTitle>Frame Time</ChartTitle>
            <Band>label1</Band>
            <FrameTimePlot />
            <RangeSlider />
          </ChartBlock>
        </Panel>
        <Feedback>
          <svg width="16" height="16" viewBox="0 0 16 16">
            <path d="M2 0H14Q16 0 16 2V11Q16 13 14 13H7L4.500 16L4 13H2Q0 13 0 11V2Q0 0 2 0Z" fill="#fff" />
            <g fill="#6f69d0"><circle cx="4" cy="6.500" r="1.300" /><circle cx="8" cy="6.500" r="1.300" /><circle cx="12" cy="6.500" r="1.300" /></g>
          </svg>
          <FeedbackText>留言 · 咨询</FeedbackText>
        </Feedback>
        <Drawer>
          <svg width="33" height="30" viewBox="0 0 33 30" fill="none" stroke="#565b70" strokeWidth="3.600" strokeLinecap="round" strokeLinejoin="round">
            <path d="M16.500 2.500L2.500 15L16.500 27.500M31 2.500L17 15L31 27.500" />
          </svg>
        </Drawer>
      </Main>
      <ScrollBar>
        <ScrollArrow $up $gap={14} />
        <ScrollThumb />
        <ScrollArrow $gap={872} />
      </ScrollBar>
    </Page>
  );
}
